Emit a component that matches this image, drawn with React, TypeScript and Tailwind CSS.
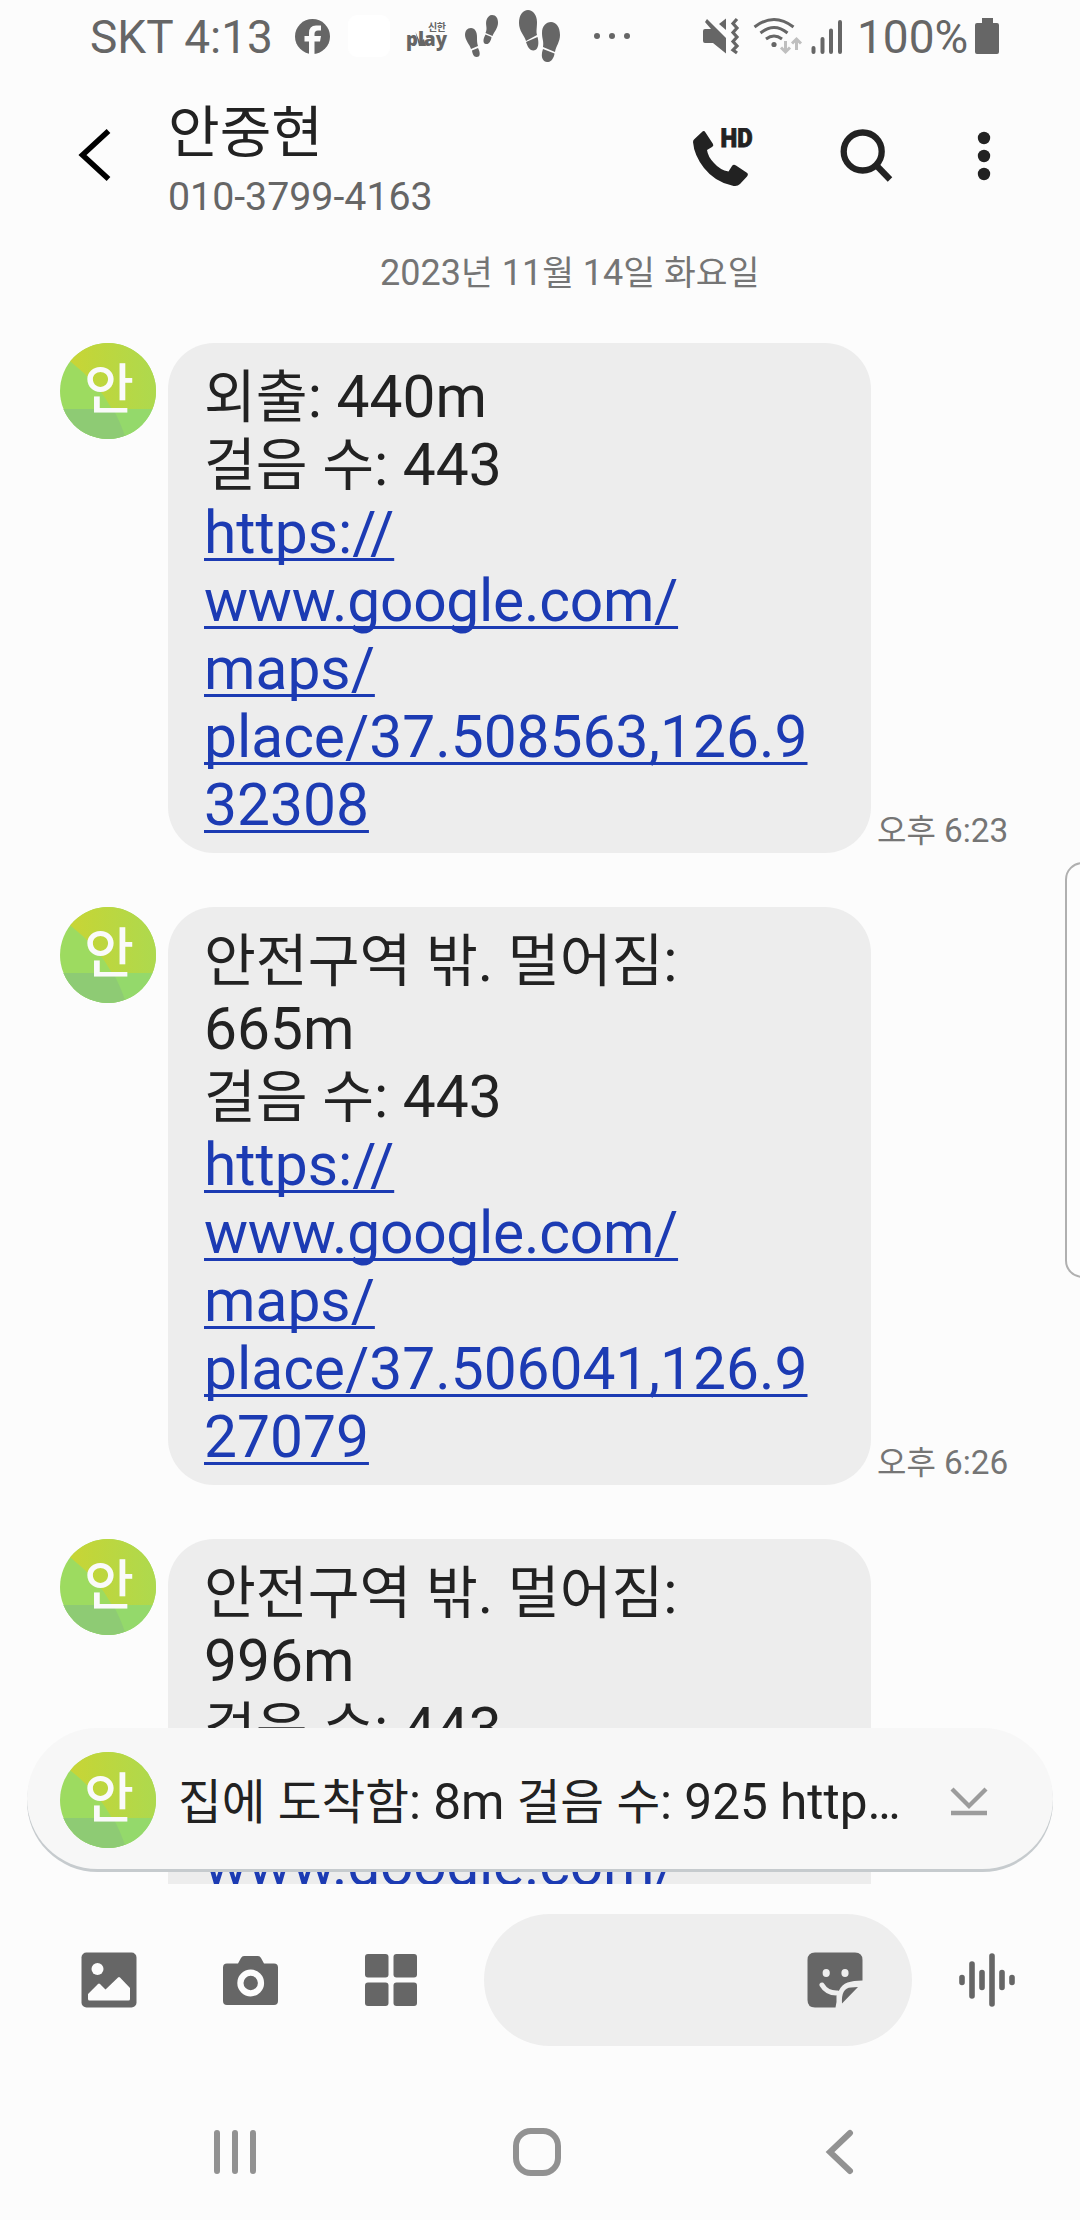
import type { ReactNode } from "react";

type Message = {
  id: number;
  lines: string[];
  link: string[];
  time: string;
};

const messages: Message[] = [
  {
    id: 1,
    lines: ["외출: 440m", "걸음 수: 443"],
    link: ["https://", "www.google.com/", "maps/", "place/37.508563,126.9", "32308"],
    time: "오후 6:23",
  },
  {
    id: 2,
    lines: ["안전구역 밖. 멀어짐:", "665m", "걸음 수: 443"],
    link: ["https://", "www.google.com/", "maps/", "place/37.506041,126.9", "27079"],
    time: "오후 6:26",
  },
  {
    id: 3,
    lines: ["안전구역 밖. 멀어짐:", "996m", "걸음 수: 443"],
    link: ["https://", "www.google.com/"],
    time: "",
  },
];

// Hangul runs get their own size so they sit evenly beside the Latin digits
function Ko({ children }: { children: string }) {
  return (
    <>
      {children.split(/([가-힣]+)/).map((part, i) =>
        /[가-힣]/.test(part) ? (
          <span key={i} className="text-[0.96em]">
            {part}
          </span>
        ) : (
          part
        )
      )}
    </>
  );
}

function Avatar() {
  return (
    <svg viewBox="0 0 96 96" className="size-24 shrink-0">
      <defs>
        <linearGradient id="lime" x1="0" x2="1" y1="0" y2="0">
          <stop offset="0" stopColor="#ccd434" />
          <stop offset="0.35" stopColor="#c0d63b" />
          <stop offset="1" stopColor="#aed94e" />
        </linearGradient>
        <clipPath id="round">
          <circle cx="48" cy="48" r="48" />
        </clipPath>
      </defs>
      <g clipPath="url(#round)">
        <rect width="96" height="96" fill="#9ddb60" />
        <path d="M0 9 L11 19 Q38 40 52 66 H96 V0 H0Z" fill="url(#lime)" />
        <rect y="66" width="96" height="30" fill="#94d96b" />
        <path d="M0 66 H53 Q60 78 66 96 H0Z" fill="#8ecb74" />
      </g>
      <text
        x="49"
        y="66"
        textAnchor="middle"
        fontSize="54"
        fontWeight="500"
        fill="#fafafa"
        fontFamily="'Noto Sans CJK KR', sans-serif"
      >
        안
      </text>
    </svg>
  );
}

function StatusBar() {
  return (
    <div className="flex h-[75px] shrink-0 items-start pl-[90px] text-[46px] leading-[75px] text-[#666]">
      <span className="w-[205px] whitespace-nowrap">SKT 4:13</span>
      <svg width="35" height="35" viewBox="0 0 35 35" className="mt-[19px]">
        <circle cx="17.5" cy="17.5" r="17.5" fill="#666" />
        <path
          d="M14 35V22.5H9.5V17H14V14Q14 6.5 21 6.5H26V11.5H23Q19.5 11.5 19.5 15V17H26L25 22.5H19.5V35Z"
          fill="#fcfcfc"
        />
      </svg>
      <div className="mt-[15px] ml-[18px] h-[42px] w-[42px] rounded-[9px] bg-white" />
      <svg width="42" height="42" viewBox="0 0 42 42" className="mt-[15px] ml-[16px]" fill="#666">
        <text x="22" y="15.5" fontSize="10" fontWeight="700" textLength="18" fontFamily="'Noto Sans CJK KR', sans-serif">
          신한
        </text>
        <text x="0" y="31" fontSize="18.5" fontWeight="800" textLength="41" lengthAdjust="spacingAndGlyphs" fontFamily="'Open Sans', sans-serif">
          play
        </text>
        <path d="M9.500 17L14 27L18 24L20 31H13Z" />
      </svg>
      <svg width="34" height="43" viewBox="0 0 34 43" className="mt-[14px] ml-[17px]" fill="#666">
        <path d="M6 14C10 14 12 18 12 23C12 27 12 29 13 32L6 35C5 31 0 26 0 21C0 17 2 14 6 14Z" />
        <path d="M7 36.500L13 34C15 38 16 43 11.500 43C8.500 43 7.500 40 7 36.500Z" />
        <path d="M27 1C31 1 33 4 33 9C33 14 29 18 27.500 22L20.500 19C23 14 20 11 21.500 6C22.500 3 24.500 1 27 1Z" />
        <path d="M20.500 20.500L26.500 23C26 27 24 30.500 21 30C17.500 29.500 18 25 20.500 20.500Z" />
      </svg>
      <svg width="42" height="53" viewBox="0 0 42 53" className="mt-[9px] ml-[20px]" fill="#666">
        <path d="M9 1C14 1 18 6 18 13C18 19 17 22 18 26L7 32C5 26 0 22 0 14C0 6 4 1 9 1Z" />
        <path d="M7 33L18.500 28C20 33 20 41 14.500 41.500C10 41.500 8.500 37 7 33Z" />
        <path d="M32 13C37 13 41 18 41 26C41 33 37 37 36 43L24 38C25 32 23 30 23 24C23 17 27 13 32 13Z" />
        <path d="M24 40L35.500 44.500C35 49 32 53.500 28 53C22 52 22 45 24 40Z" />
      </svg>
      <svg width="36" height="8" viewBox="0 0 36 8" className="mt-[32px] ml-[33px]" fill="#666">
        <circle cx="3" cy="4" r="3" />
        <circle cx="18" cy="4" r="3" />
        <circle cx="33" cy="4" r="3" />
      </svg>
      <svg width="38" height="38" viewBox="0 0 38 38" className="mt-[17px] ml-[73px]" fill="#666">
        <path d="M0 14Q0 12 2 12H8L2 5L4 2L23 21V36.500L10 26H2Q0 26 0 24Z" />
        <path d="M23 1.500V13L16 7Z" />
        <path
          d="M34 2L30 6.500L34 11L30 15.500L34 20L30 24.500L34 29L30 33L34 36"
          fill="none"
          stroke="#666"
          strokeWidth="3.200"
        />
      </svg>
      <svg width="50" height="38" viewBox="0 0 50 38" className="mt-[17px] ml-[12px]" fill="none" stroke="#666" strokeWidth="3">
        <path d="M1.500 10Q21 -5 40.500 10M7.500 16Q21 5 34.500 16M13 22Q21 16 29 22" />
        <circle cx="21" cy="27.500" r="2.600" fill="#666" stroke="none" />
        <path d="M32.500 24V34M28 30.500L32.500 35L37 30.500M43.500 33V23M39 26.500L43.500 22L48 26.500" stroke="#bfbfbf" />
      </svg>
      <svg width="32" height="36" viewBox="0 0 32 36" className="mt-[19px] ml-[8px]" stroke="#666" strokeWidth="4" strokeLinecap="round">
        <path d="M2.500 29V33M11.500 20V33M20 11.500V33M29 3V33" />
      </svg>
      <span className="ml-[14px] w-[118px] whitespace-nowrap">100%</span>
      <svg width="24" height="36" viewBox="0 0 24 36" className="mt-[18px]" fill="#666">
        <path d="M7 0H18V5H22Q24 5 24 7V34Q24 36 22 36H2Q0 36 0 34V7Q0 5 2 5H7Z" />
      </svg>
    </div>
  );
}

function Header() {
  return (
    <header className="flex h-[165px] shrink-0 items-start pl-[78px]">
      <svg width="36" height="54" viewBox="0 0 36 54" className="mt-[53px]" fill="none" stroke="#000" strokeWidth="5.500">
        <path d="M30.500 3L4.500 27L30.500 51" />
      </svg>
      <div className="ml-[54px] flex w-[525px] flex-col">
        <h1 className="mt-[13px] h-[88px] text-[58.500px] leading-[88px] text-[#222]">
          <Ko>안중현</Ko>
        </h1>
        <p className="-mt-[3px] text-[39.300px] leading-[48px] text-[#666]">010-3799-4163</p>
      </div>
      <svg width="60" height="60" viewBox="0 0 60 60" className="mt-[53px]" fill="#222">
        <path d="M1.500 11L9 4Q11 2 12.500 4.500L20 16Q21 18 19 19L14 22Q15 29 21 35Q27 42 35.500 43.500L39 38Q40.500 36 43 37.500L53.500 44.500Q56 46 54 48.500L47 56Q44 59 39 57.500Q22 54 11 40Q1 27 0 14Q0 12 1.500 11Z" />
        <text
          x="27.500"
          y="19"
          fontSize="25"
          fontWeight="900"
          textLength="32"
          lengthAdjust="spacingAndGlyphs"
          stroke="#222"
          strokeWidth="0.800"
          fontFamily="Roboto, sans-serif"
        >
          HD
        </text>
      </svg>
      <svg width="54" height="54" viewBox="0 0 54 54" className="mt-[53px] ml-[86px]" fill="none" stroke="#222" strokeWidth="6.300">
        <circle cx="23.700" cy="23.500" r="19" />
        <path d="M37 37L51 51.500" />
      </svg>
      <svg width="14" height="50" viewBox="0 0 14 50" className="mt-[56px] ml-[84px]" fill="#222">
        <circle cx="7" cy="7" r="6.200" />
        <circle cx="7" cy="25" r="6.200" />
        <circle cx="7" cy="43" r="6.200" />
      </svg>
    </header>
  );
}

function Bubble({ message }: { message: Message }) {
  return (
    <div className="flex shrink-0 items-start">
      <Avatar />
      <div className="ml-3 min-h-[430px] w-[703px] rounded-[46px] bg-[#ededed] pt-5 pb-[14px] pl-9 text-[58.700px] leading-[68px] whitespace-nowrap text-[#222]">
        {message.lines.map((line) => (
          <p key={line} className="h-[68px]">
            <Ko>{line}</Ko>
          </p>
        ))}
        {message.link.map((line) => (
          <p key={line} className={line.startsWith("www") ? "h-[68px] tracking-[-0.25px]" : "h-[68px]"}>
            <a className="text-[#1c3bb3] underline decoration-3 underline-offset-[5px] [text-decoration-skip-ink:none]">
              {line}
            </a>
          </p>
        ))}
      </div>
      <span className="ml-[6px] self-end text-[33.300px] leading-[43px] whitespace-nowrap text-[#757575]">
        <Ko>{message.time}</Ko>
      </span>
    </div>
  );
}

function NewMessageBar() {
  return (
    <div className="absolute top-[1728px] left-[27px] flex h-[141px] w-[1026px] items-center rounded-[72px] bg-[#f7f7f7] pt-[3px] pl-[33px] shadow-[0_3px_0_#c6cbce]">
      <Avatar />
      <p className="mt-[4px] ml-[22px] w-[770px] text-[49.500px] leading-[70px] whitespace-nowrap text-[#222]">
        <Ko>집에 도착함: 8m 걸음 수: 925 http…</Ko>
      </p>
      <svg width="40" height="32" viewBox="0 0 40 32" fill="none" stroke="#9c9c9c" strokeWidth="4.300">
        <path d="M4 5L21 22L38 5M3 29H39" />
      </svg>
    </div>
  );
}

function ToolButton({ children, className }: { children: ReactNode; className: string }) {
  return <button className={className}>{children}</button>;
}

function Composer() {
  return (
    <div className="flex h-[192px] shrink-0 items-center pl-[81px] text-[#666]">
      <ToolButton className="w-[141px]">
        <svg width="56" height="56" viewBox="0 0 56 56" fill="#666">
          <rect x="0.500" y="0.500" width="55" height="55" rx="5" />
          <circle cx="16.500" cy="17" r="6" fill="#fcfcfc" />
          <path d="M7 42L17 32Q18 31 19 32L24.500 37.500L37 25.500Q38 24.500 39 25.500L49 36V47Q49 48.500 47.500 48.500H8.500Q7 48.500 7 47Z" fill="#fcfcfc" />
        </svg>
      </ToolButton>
      <ToolButton className="w-[143px]">
        <svg width="57" height="56" viewBox="0 0 57 56" fill="#666">
          <path d="M5 11.500H16L19 6Q20 4 22 4H36Q38 4 39 6L42 11.500H52Q56 11.500 56 15.500V49Q56 53 52 53H5Q1 53 1 49V15.500Q1 11.500 5 11.500Z" />
          <circle cx="28.700" cy="31" r="10.300" fill="none" stroke="#fcfcfc" strokeWidth="6.200" />
        </svg>
      </ToolButton>
      <ToolButton className="w-[119px]">
        <svg width="52" height="52" viewBox="0 0 52 52" fill="#666">
          <rect width="23.500" height="23.500" rx="3" />
          <rect x="28.500" width="23.500" height="23.500" rx="3" />
          <rect y="28.500" width="23.500" height="23.500" rx="3" />
          <rect x="28.500" y="28.500" width="23.500" height="23.500" rx="3" />
        </svg>
      </ToolButton>
      <div className="flex h-[132px] w-[428px] items-center justify-end rounded-full bg-[#eee] pr-[49px]">
        <svg width="56" height="56" viewBox="0 0 56 56" fill="#666">
          <path d="M8 0.500H48Q55.500 0.500 55.500 8V28.500C43 29 36 30 32 38.500L29.500 44Q30 50 28.500 55.500H8Q0.500 55.500 0.500 48V8Q0.500 0.500 8 0.500Z" />
          <ellipse cx="19.200" cy="21" rx="3.600" ry="4" fill="#eee" />
          <ellipse cx="38" cy="21" rx="3.600" ry="4" fill="#eee" />
          <path d="M15 33Q20 41.500 30.500 41" fill="none" stroke="#eee" strokeWidth="5" strokeLinecap="round" />
          <path d="M51 35L35 51.500Q34 36 44 35.500Z" />
        </svg>
      </div>
      <svg width="58" height="56" viewBox="0 0 58 56" className="ml-[46px]" stroke="#666" strokeWidth="5.600" strokeLinecap="round">
        <path d="M4 25.500V30.500M14 12V44M24 20.500V35.500M34 4V52M44 20.500V35.500M54 25.500V30.500" />
      </svg>
    </div>
  );
}

function NavBar() {
  return (
    <nav className="flex h-[144px] shrink-0 items-center pt-2 pl-[213px]">
      <svg width="44" height="46" viewBox="0 0 44 46" stroke="#929292" strokeWidth="6" strokeLinecap="round">
        <path d="M4 4V42M22 4V42M40 4V42" />
      </svg>
      <div className="ml-[256px] size-12 rounded-[18px] border-6 border-[#929292]" />
      <svg width="30" height="46" viewBox="0 0 30 46" className="ml-[264px]" fill="none" stroke="#929292" strokeWidth="6" strokeLinecap="round">
        <path d="M25 4L5 23L25 42" />
      </svg>
    </nav>
  );
}

export default function App() {
  return (
    <div
      lang="ko"
      className="relative flex h-[2220px] w-[1080px] flex-col overflow-hidden bg-[#fcfcfc] font-[Roboto,'Noto_Sans_CJK_KR',sans-serif]"
    >
      <StatusBar />
      <Header />
      <main className="flex h-[1644px] shrink-0 flex-col overflow-hidden pl-[60px]">
        <p className="mt-[9px] mb-[46px] h-12 shrink-0 pl-[320px] text-[36px] leading-[48px] text-[#757575]">
          <Ko>2023년 11월 14일 화요일</Ko>
        </p>
        <div className="flex flex-col gap-[54px]">
          {messages.map((message) => (
            <Bubble key={message.id} message={message} />
          ))}
        </div>
      </main>
      <Composer />
      <NavBar />
      <NewMessageBar />
      {/* edge panel handle */}
      <div className="absolute top-[862px] -right-5 h-[416px] w-[35px] rounded-[18px] border-2 border-[#b0b0b0] bg-[#fdfdfd]" />
    </div>
  );
}
